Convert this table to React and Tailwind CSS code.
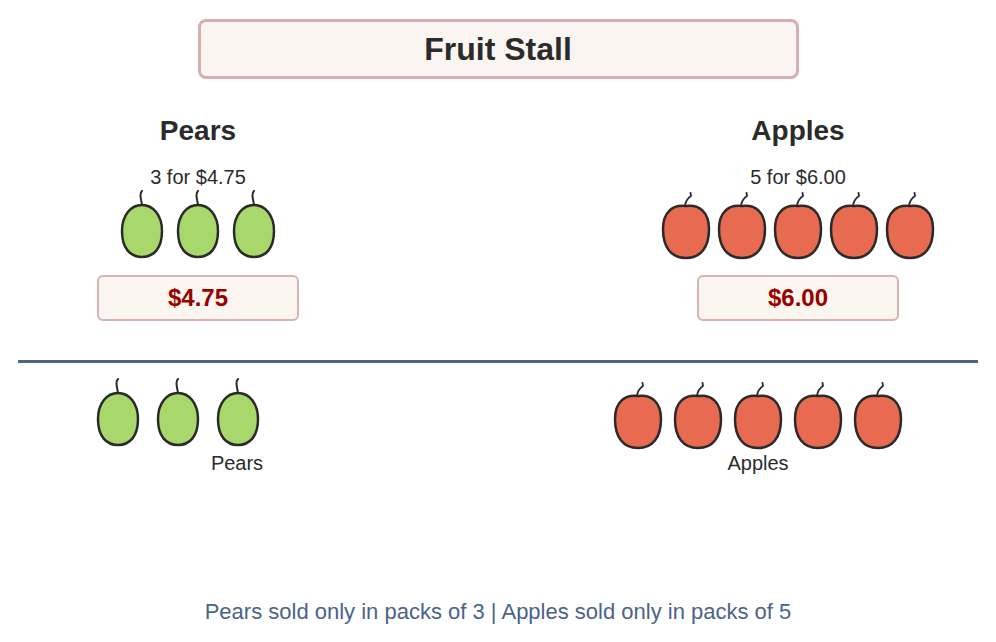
import React from "react";

const INK = "#2a2a2a";

function Pear() {
  return (
    <svg width="44" height="70" viewBox="0 0 44 70" className="shrink-0">
      <path
        d="M22 15 C33 15 42 25 42 41 C42 58 34 67 22 67 C10 67 2 58 2 41 C2 25 11 15 22 15 Z"
        fill="#a8d76b"
        stroke={INK}
        strokeWidth="2.5"
      />
      <path
        d="M22 15 C21.5 11 20.5 9 20.5 5 C20.5 3 21 2 22 1"
        fill="none"
        stroke={INK}
        strokeWidth="2"
        strokeLinecap="round"
      />
    </svg>
  );
}

function Apple() {
  return (
    <svg width="50" height="70" viewBox="0 0 50 70" className="shrink-0">
      <path
        d="M25 16 C12 14 2 22 2 39 C2 57 10 68 25 68 C40 68 48 57 48 39 C48 22 38 14 25 16 Z"
        fill="#e86a50"
        stroke={INK}
        strokeWidth="2.5"
      />
      <path
        d="M24 16 C24.5 11 27 8 30 6 L29.5 3"
        fill="none"
        stroke={INK}
        strokeWidth="1.8"
        strokeLinecap="round"
        strokeLinejoin="round"
      />
    </svg>
  );
}

function StallColumn({ name, deal, price, children }) {
  return (
    <div className="w-[396px] flex flex-col items-center">
      <h2 className="mt-[37px] text-[28px] leading-[30px] font-bold">{name}</h2>
      <p className="mt-[19px] text-[20px] leading-[24px]">{deal}</p>
      <div className="mt-px flex">{children}</div>
      <div className="mt-[15px] w-[202px] h-[46px] border-2 border-[#d8b3b3] rounded-[6px] bg-[#faf5ef] flex items-center justify-center text-[24px] font-bold text-[#990000]">
        {price}
      </div>
    </div>
  );
}

export default function App() {
  return (
    <div className="w-[996px] h-[642px] bg-white text-[#2b2b2b] font-['Liberation_Sans',Arial,sans-serif] overflow-hidden">
      <div className="pt-[19px] flex justify-center">
        <div className="w-[601px] h-[60px] border-[3px] border-[#d6b0b0] rounded-[8px] bg-[#faf5f0] flex items-center justify-center text-[32px] font-bold">
          Fruit Stall
        </div>
      </div>

      <div className="flex justify-between">
        <StallColumn name="Pears" deal="3 for $4.75" price="$4.75">
          <div className="flex gap-[12px]">
            <Pear />
            <Pear />
            <Pear />
          </div>
        </StallColumn>
        <StallColumn name="Apples" deal="5 for $6.00" price="$6.00">
          <div className="flex gap-[6px]">
            <Apple />
            <Apple />
            <Apple />
            <Apple />
            <Apple />
          </div>
        </StallColumn>
      </div>

      <div className="mt-[39px] mx-[18px] h-[3px] bg-[#4a6488]" />

      <div className="flex items-start pl-[96px]">
        <div className="mt-[15px] w-[282px] flex flex-col">
          <div className="flex gap-[16px]">
            <Pear />
            <Pear />
            <Pear />
          </div>
          <p className="mt-[3px] text-center text-[20px] leading-[24px]">Pears</p>
        </div>
        <div className="ml-[235px] mt-[17px] w-[290px] flex flex-col">
          <div className="flex gap-[10px]">
            <Apple />
            <Apple />
            <Apple />
            <Apple />
            <Apple />
          </div>
          <p className="mt-px text-center text-[20px] leading-[24px]">Apples</p>
        </div>
      </div>

      <p className="mt-[124px] text-center text-[22px] leading-[26px] text-[#4a6488]">
        Pears sold only in packs of 3 | Apples sold only in packs of 5
      </p>
    </div>
  );
}
